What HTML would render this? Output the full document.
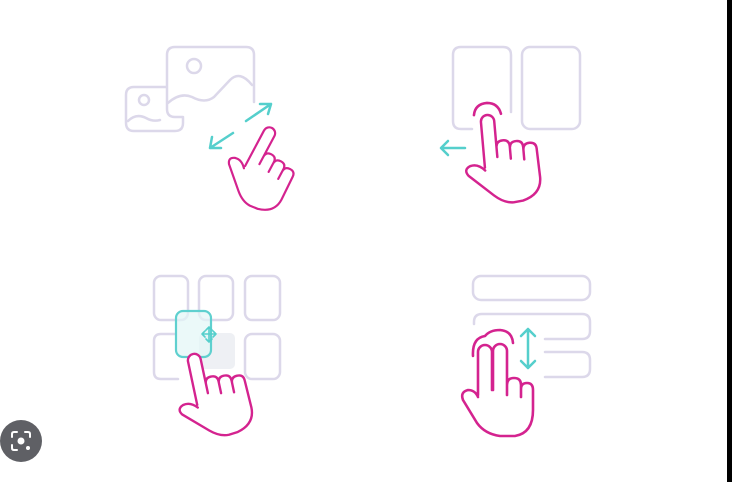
<!DOCTYPE html>
<html><head><meta charset="utf-8"><style>
html,body{margin:0;padding:0;background:#fff;width:732px;height:482px;overflow:hidden}
svg{position:absolute;left:0;top:0}
</style></head><body>
<svg width="732" height="482" viewBox="0 0 732 482" xmlns="http://www.w3.org/2000/svg">
<rect x="727" y="0" width="5" height="482" fill="#000"/>
<g fill="none" stroke="#dcd8ea" stroke-width="2.5" stroke-linecap="round" stroke-linejoin="round">
 <path d="M183,117 L175,117 Q167,117 167,109 L167,55 Q167,47 175,47 L246,47 Q254,47 254,55 L254,102"/>
 <circle cx="194" cy="66" r="7"/>
 <path d="M168,103 Q180,92 192,97 Q205,104 214,97 L230,80 Q240,70 252,85"/>
 <path d="M166,87 L134,87 Q126,87 126,95 L126,123 Q126,131 134,131 L175,131 Q183,131 183,123 L183,118"/>
 <circle cx="144" cy="100" r="5"/>
 <path d="M128,121 Q136,113 146,118 Q153,122 160,120"/>
 <path d="M472,129 L461,129 Q453,129 453,121 L453,55 Q453,47 461,47 L503,47 Q511,47 511,55 L511,112"/>
 <rect x="522" y="47" width="58" height="82" rx="8"/>
 <rect x="154" y="276" width="34" height="44" rx="7"/>
 <rect x="199" y="276" width="34" height="44" rx="7"/>
 <rect x="245" y="276" width="35" height="44" rx="7"/>
 <path d="M175,334 L161,334 Q154,334 154,341 L154,372 Q154,379 161,379 L178,379"/>
 <rect x="245" y="334" width="35" height="45" rx="7"/>
 <rect x="473" y="276" width="117" height="24" rx="8"/>
 <path d="M474,324 L474,322 Q474,314 482,314 L582,314 Q590,314 590,322 L590,331 Q590,339 582,339 L545,339"/>
 <path d="M545,352 L582,352 Q590,352 590,360 L590,369 Q590,377 582,377 L545,377"/>
</g>
<rect x="199" y="333" width="36" height="36" rx="5" fill="#eef0f4"/>
<rect x="176" y="311" width="35" height="46" rx="7" fill="#e3f6f6" fill-opacity="0.7" stroke="#5fd0cf" stroke-width="2.2"/>
<g fill="none" stroke="#55cfcc" stroke-width="2.5" stroke-linecap="round" stroke-linejoin="round">
 <path d="M246,121 L271,104 M260,104 L271,104 L268,114"/>
 <path d="M233,133 L210,148 M212,137 L210,148 L221,148"/>
 <path d="M465,148 L441,148 M448,141 L441,148 L448,155"/>
 <path d="M528,329 L528,368 M521,336 L528,329 L535,336 M521,361 L528,368 L535,361"/>
 <path d="M209,327 L209,342 M202,334 L216,334 M206,330 L209,327 L212,330 M206,339 L209,342 L212,339 M205,331 L202,334 L205,337 M213,331 L216,334 L213,337" stroke-width="1.6"/>
</g>
<defs>
 <path id="hand" d="M-7,55 L-7,7 A7,7 0 0 1 7,7 L7,45 M7,35 Q7,28 14,28 Q21,28 21,35 L21,48 M21,37 Q21,30 28,30 Q35,30 35,37 L35,50 M35,40 Q35,33 42,33 Q49,33 49,40 L50,70 Q50,88 30,93 L20,94 Q10,94 0,85 L-25,62 Q-30,55 -22,52 Q-14,50 -7,58"/>
</defs>
<g fill="none" stroke="#d4238f" stroke-width="2.6" stroke-linecap="round" stroke-linejoin="round">
 <use href="#hand" transform="translate(272,128) rotate(28) scale(0.84)" fill="#fff"/>
 <use href="#hand" transform="translate(487,115) rotate(-5) scale(0.95)" fill="#fff"/>
 <path d="M474,114 Q476,103 488,103 Q499,104 501,115" transform="rotate(-5 487 115)"/>
 <use href="#hand" transform="translate(193,354) rotate(-12) scale(0.92)" fill="#fff"/>
 <path fill="#fff" d="M-7,50 L-7,7 A7,7 0 0 1 7,7 L7,45 M8,45 L8,6 A7,7 0 0 1 22,6 L22,50 M22,40 Q22,33 29,33 Q36,33 36,40 L36,52 M36,44 Q36,38 42,38 Q48,38 48,45 L48,65 Q48,88 30,91 L15,91 Q0,89 -8,78 L-22,55 Q-25,47 -17,45 Q-10,45 -7,52" transform="translate(485,345)"/>
 <path d="M473,356 Q472,338 485,336 Q490,330 500,330 Q512,331 513,343"/>
</g>
<circle cx="21" cy="441" r="21" fill="#5f6065"/>
<g fill="none" stroke="#fff" stroke-width="2" stroke-linecap="round">
 <path d="M12,437 L12,434 Q12,432 14,432 L17,432 M25,432 L28,432 Q30,432 30,434 L30,437 M12,445 L12,448 Q12,450 14,450 L17,450"/>
</g>
<circle cx="21" cy="441" r="3.5" fill="#fff"/>
<circle cx="28" cy="448" r="2" fill="#fff"/>
</svg>
</body></html>
